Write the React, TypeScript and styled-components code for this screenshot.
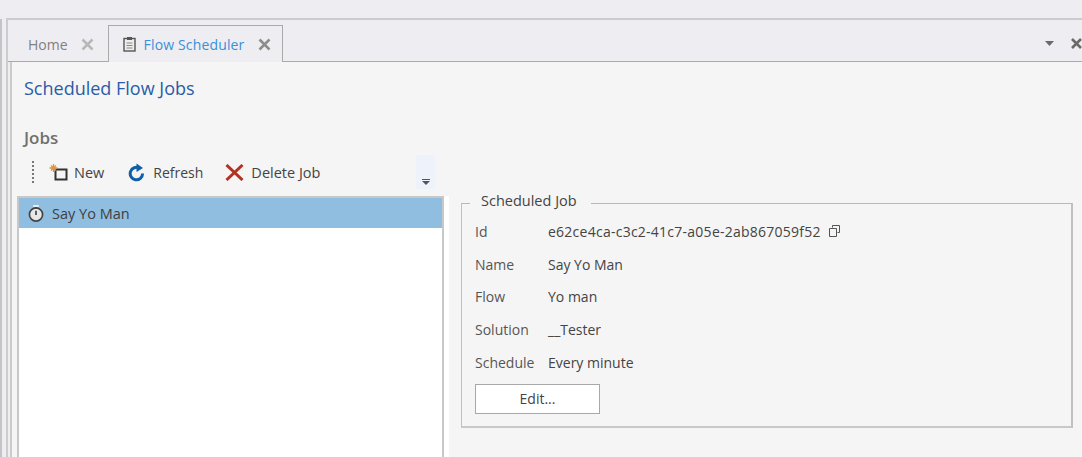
import React from 'react';
import styled, { createGlobalStyle } from 'styled-components';

const Global = createGlobalStyle`
  html, body { margin: 0; padding: 0; height: 457px; overflow: hidden; background: #eeeef2; }
  #root { height: 457px; }
  * { box-sizing: border-box; }
`;

const Page = styled.div`
  width: 1082px; height: 457px; overflow: hidden; display: flex;
  padding-top: 18px; background: #eeeef2;
  font-family: "Open Sans", "Noto Sans", sans-serif; font-size: 14px; color: #444;
`;
const LeftRail = styled.div`
  width: 6px; flex: none; margin-top: 1px;
  border-left: 2px solid #c4c4c6;
`;
const Shell = styled.div`
  flex: 1; display: flex; flex-direction: column; min-width: 0;
  border-left: 2px solid #cccccc; border-top: 2px solid #cccccc;
`;
const TabStrip = styled.div`
  height: 42px; flex: none; display: flex; align-items: flex-end; padding-left: 2px;
  border-bottom: 1px solid #aaaaaa; position: relative;
`;
const Tab = styled.div<{ $active?: boolean }>`
  display: flex; align-items: center; height: ${p => (p.$active ? 37 : 36)}px;
  margin-bottom: ${p => (p.$active ? -1 : 0)}px;
  padding-left: ${p => (p.$active ? 14 : 18)}px; padding-right: ${p => (p.$active ? 11 : 14)}px;
  padding-top: ${p => (p.$active ? 0 : 2)}px;
  color: ${p => (p.$active ? '#3a90d8' : '#808080')};
  letter-spacing: ${p => (p.$active ? '0.15px' : '0')};
  ${p => p.$active && 'border: 1px solid #aaaaaa; border-bottom: none; background: #eeeef2;'}
`;
const TabGlyph = styled.svg`margin-right: 8px; flex: none;`;
const CloseGlyph = styled.svg<{ $gap: number }>`margin-left: ${p => p.$gap}px; flex: none;`;
const StripControls = styled.div`
  position: absolute; right: 0; top: 18px; display: flex; align-items: center; gap: 17px;
`;
const Body = styled.div`
  flex: 1; min-height: 0; margin-left: 2px; background: #f5f5f5;
  border-left: 2px solid #cccccc; display: flex; flex-direction: column;
`;
const Title = styled.h1`
  margin: 0; padding: 14px 0 0 12px; height: 65px;
  font-size: 18px; font-weight: 400; color: #2a5ca8; line-height: 24px;
`;
const SectionTitle = styled.h2`
  margin: 0; padding-left: 12px; height: 27px;
  font-size: 17px; font-weight: 600; color: #707070; line-height: 22px;
`;
const Columns = styled.div`
  flex: 1; min-height: 0; display: flex;
`;
const LeftColumn = styled.div`
  width: 432px; flex: none; display: flex; flex-direction: column; padding-left: 5px;
`;
const Toolbar = styled.div`
  height: 42px; flex: none; display: flex; align-items: center; position: relative;
  padding: 0 0 6px 15px;
`;
const Gripper = styled.div`
  width: 2px; height: 22px; margin-right: 15px;
  background: repeating-linear-gradient(to bottom, #777 0 2px, transparent 2px 4px);
`;
const ToolButton = styled.div<{ $gap: number; $after: number; $size: number }>`
  display: flex; align-items: center; gap: ${p => p.$gap}px; margin-right: ${p => p.$after}px;
  font-size: ${p => p.$size}px; color: #444; white-space: nowrap;
`;
const Overflow = styled.div`
  position: absolute; left: 399px; top: 1px; width: 19px; height: 34px;
  background: #eef3fb; display: flex; align-items: flex-end; justify-content: center; padding-bottom: 4px;
`;
const List = styled.div`
  flex: 1; background: #ffffff; border: 2px solid #c8c8c8; border-bottom: none;
  box-shadow: 5px 0 0 #ffffff;
`;
const ListRow = styled.div`
  height: 30px; background: #90bee0; display: flex; align-items: center; gap: 8px; padding-left: 9px;
  color: #404040; font-size: 14.5px;
`;
const RightColumn = styled.div`
  flex: 1; min-width: 0; padding: 40px 0 0 17px;
`;
const GroupBox = styled.fieldset`
  margin: 0; width: 612px; height: 234px; padding: 3px 13px 0 13px;
  border-style: solid; border-width: 1px 2px 2px 1px; border-color: #b8b8b8 #c0c0c0 #c8c8c8 #c0c0c0;
`;
const Legend = styled.legend`
  margin-left: -5px; padding: 0 14px 4px 11px; font-size: 14.5px; color: #444; line-height: 14px;
`;
const Row = styled.div`
  display: grid; grid-template-columns: 73px 1fr; height: 32.75px; align-items: center; color: #444;
`;
const RowLabel = styled.span`color: #555;`;
const RowValue = styled.span`display: flex; align-items: center; gap: 8px;`;
const IdText = styled.span`letter-spacing: 0.25px;`;
const EditButton = styled.button`
  display: block; width: 125px; height: 30px; margin-top: 5px; padding: 0; background: #fff;
  border: 1px solid #a8a8a8; font: inherit; color: #444;
`;

const X = ({ c, gap }: { c: string; gap: number }) => (
  <CloseGlyph $gap={gap} width={13} height={13} viewBox="0 0 13 13">
    <path d="M1.5 1.5l10 10M11.5 1.5l-10 10" stroke={c} strokeWidth="2.6" fill="none" />
  </CloseGlyph>
);

export default function App() {
  return (
    <Page>
      <Global />
      <LeftRail />
      <Shell>
        <TabStrip>
          <Tab>
            Home
            <X c="#b8b8b8" gap={13} />
          </Tab>
          <Tab $active>
            <TabGlyph width="13" height="16" viewBox="0 0 13 16">
              <rect x="1" y="2.5" width="11" height="12.5" fill="#eee" stroke="#555" strokeWidth="1.4" />
              <rect x="4" y="1" width="5" height="3" fill="#555" />
              <path d="M3.5 7h6M3.5 9.5h6M3.5 12h6" stroke="#888" strokeWidth="1" />
            </TabGlyph>
            Flow Scheduler
            <X c="#8c8c8c" gap={14} />
          </Tab>
          <StripControls>
            <svg width="9" height="5" viewBox="0 0 9 5"><path d="M0 0h9L4.5 5z" fill="#6a6a6a" /></svg>
            <svg width="11" height="11" viewBox="0 0 11 11"><path d="M1 1l9 9M10 1l-9 9" stroke="#6a6a6a" strokeWidth="2.6" /></svg>
          </StripControls>
        </TabStrip>
        <Body>
          <Title>Scheduled Flow Jobs</Title>
          <SectionTitle>Jobs</SectionTitle>
          <Columns>
            <LeftColumn>
              <Toolbar>
                <Gripper />
                <ToolButton $gap={6} $after={24} $size={14.5}>
                  <svg width="19" height="18" viewBox="0 0 19 18">
                    <rect x="6.5" y="6.5" width="11" height="10" fill="none" stroke="#333" strokeWidth="2" />
                    <path d="M4.5 1v8M0.5 5h8M2 2.5l5 5M7 2.5l-5 5" stroke="#d9963c" strokeWidth="1.3" />
                  </svg>
                  New
                </ToolButton>
                <ToolButton $gap={8} $after={22} $size={14}>
                  <svg width="17" height="19" viewBox="0 0 17 19">
                    <path d="M11.5 5.2A6.2 6.2 0 1 0 14.6 10.5" fill="none" stroke="#0f5fa8" strokeWidth="3" />
                    <path d="M8.5 0.5v8.5l6.5-4z" fill="#0f5fa8" />
                  </svg>
                  Refresh
                </ToolButton>
                <ToolButton $gap={7} $after={0} $size={14.5}>
                  <svg width="19" height="17" viewBox="0 0 19 17">
                    <path d="M1.5 1l16 15M17.5 1l-16 15" stroke="#b43222" strokeWidth="3" />
                  </svg>
                  Delete Job
                </ToolButton>
                <Overflow>
                  <svg width="8" height="6" viewBox="0 0 8 6">
                    <path d="M0 0h8v1H0zM0 2h8L4 6z" fill="#555" />
                  </svg>
                </Overflow>
              </Toolbar>
              <List>
                <ListRow>
                  <svg width="16" height="19" viewBox="0 0 17 19">
                    <circle cx="8.5" cy="10.5" r="7" fill="#e8e8e8" stroke="#444" strokeWidth="1.8" />
                    <path d="M5.5 1.5h6" stroke="#f0f0f0" strokeWidth="2" />
                    <path d="M8.5 2.5v2" stroke="#444" strokeWidth="2" />
                    <path d="M8.5 6.5v4.5" stroke="#333" strokeWidth="1.6" />
                  </svg>
                  Say Yo Man
                </ListRow>
              </List>
            </LeftColumn>
            <RightColumn>
              <GroupBox>
                <Legend>Scheduled Job</Legend>
                <Row>
                  <RowLabel>Id</RowLabel>
                  <RowValue>
                    <IdText>e62ce4ca-c3c2-41c7-a05e-2ab867059f52</IdText>
                    <svg width="11" height="12" viewBox="0 0 11 12">
                      <path d="M3.5 2.5v-2h7v7h-2M0.5 3.5h7v8h-7z" fill="none" stroke="#555" />
                    </svg>
                  </RowValue>
                </Row>
                <Row><RowLabel>Name</RowLabel><RowValue>Say Yo Man</RowValue></Row>
                <Row><RowLabel>Flow</RowLabel><RowValue>Yo man</RowValue></Row>
                <Row><RowLabel>Solution</RowLabel><RowValue>__Tester</RowValue></Row>
                <Row><RowLabel>Schedule</RowLabel><RowValue>Every minute</RowValue></Row>
                <EditButton>Edit...</EditButton>
              </GroupBox>
            </RightColumn>
          </Columns>
        </Body>
      </Shell>
    </Page>
  );
}
